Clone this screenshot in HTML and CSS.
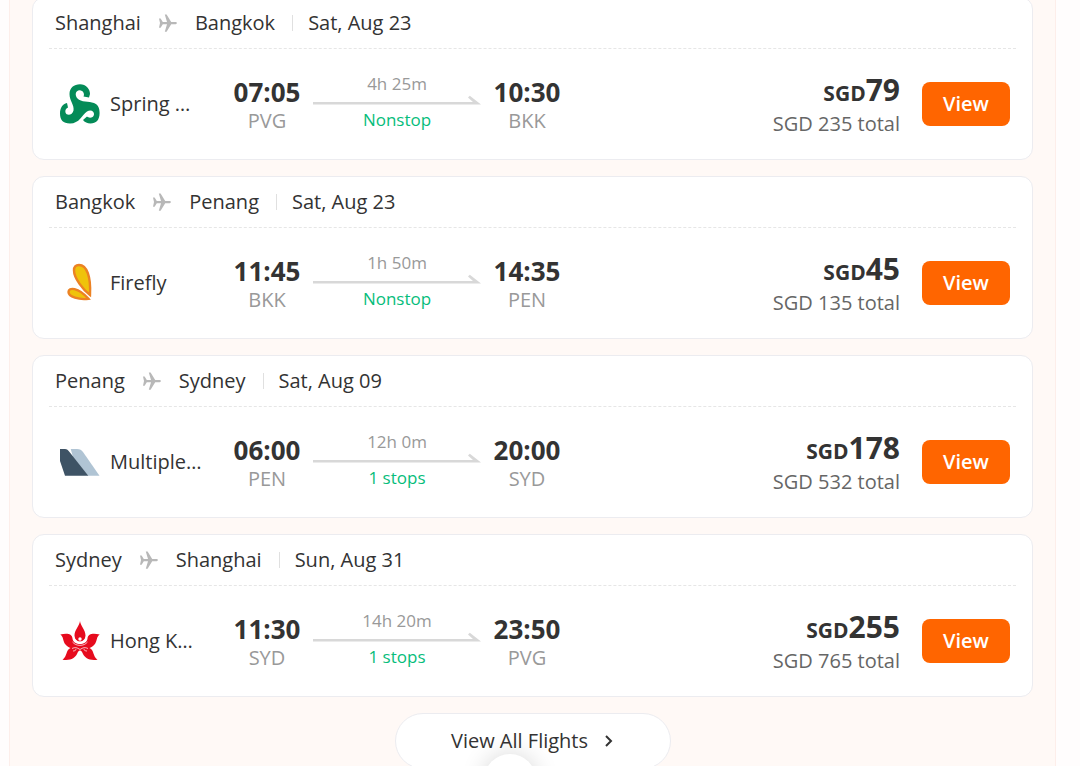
FILE: index.html
```html
<!DOCTYPE html>
<html lang="en">
<head>
<meta charset="utf-8">
<meta name="viewport" content="width=device-width, initial-scale=1">
<title>Flights</title>
<link rel="stylesheet" href="styles.css">
</head>
<body>
<svg class="defs" aria-hidden="true">
  <symbol id="plane" viewBox="0 0 20 20">
    <path d="M1 5.500h1.600l2.200 3.500H9L6.800 1.500h1.800l4.600 7.500h4.500c1.600 0 1.600 2.200 0 2.200h-4.500L8.600 18.700H6.800L9 11.200H4.800L2.600 14.700H1l1-4.600z" fill="#b8b8b8"/>
  </symbol>
  <symbol id="arrow" viewBox="0 0 168 10">
    <path d="M0 7H160L155 2.500 156.800 .8 168 9.500H0z" fill="#d8d8d8"/>
  </symbol>
</svg>
<main class="panel">
  <article class="card">
    <header class="route"><span>Shanghai</span><svg class="plane"><use href="#plane"/></svg><span>Bangkok</span><time class="date">Sat, Aug 23</time></header>
    <div class="flight">
      <svg class="logo" viewBox="0 0 40 40"><path fill="#048b58" d="M9.500 10C9.500 4 14 .3 20 .3S30 5 30 10L29 13.500 23.500 12.500C25 10 23 6 19.500 6.200 15.500 6.500 14.500 11 17.500 14.500 21 18.500 29 17 34 19 38 20.500 39.600 24 39.600 29 39.600 36 36 39.500 30.500 39.500 27.500 39.500 24.500 38 23 36L27 32.500C29 34.500 33.500 34 34 30.500 34.500 27 30.500 25 27 27.500 22 31 19.500 39.500 10 39.500 3 39.500 0 36 0 29.500 0 24 2.500 20 7 19L8 23.500C5.500 24.500 5 26.500 5.500 28.500 6.500 32 12.500 31.500 13.500 26.500 14.500 21 9.500 17 9.500 10z"/></svg>
      <span class="airline">Spring Airlines</span>
      <div class="stop"><time>07:05</time><span>PVG</span></div>
      <div class="leg"><span class="duration">4h 25m</span><svg class="arrow"><use href="#arrow"/></svg><span class="stops">Nonstop</span></div>
      <div class="stop"><time>10:30</time><span>BKK</span></div>
      <div class="price"><strong><small>SGD</small>79</strong><span>SGD 235 total</span></div>
      <button class="view" type="button">View</button>
    </div>
  </article>
  <article class="card">
    <header class="route"><span>Bangkok</span><svg class="plane"><use href="#plane"/></svg><span>Penang</span><time class="date">Sat, Aug 23</time></header>
    <div class="flight">
      <svg class="logo" viewBox="0 0 40 40"><g fill="#efc30b" stroke="#ec8224" stroke-width="2.400"><path d="M30 32C23 27 14 15 14 7.500 14 3.500 16 2 19 2 27 2 31 14 30 32z"/><path d="M28.500 35.800C19 37 8.500 34 8.500 29 8.500 24 18 24 28.500 35.800z"/></g></svg>
      <span class="airline">Firefly</span>
      <div class="stop"><time>11:45</time><span>BKK</span></div>
      <div class="leg"><span class="duration">1h 50m</span><svg class="arrow"><use href="#arrow"/></svg><span class="stops">Nonstop</span></div>
      <div class="stop"><time>14:35</time><span>PEN</span></div>
      <div class="price"><strong><small>SGD</small>45</strong><span>SGD 135 total</span></div>
      <button class="view" type="button">View</button>
    </div>
  </article>
  <article class="card">
    <header class="route"><span>Penang</span><svg class="plane"><use href="#plane"/></svg><span>Sydney</span><time class="date">Sat, Aug 09</time></header>
    <div class="flight">
      <svg class="logo" viewBox="0 0 40 40"><path fill="#b0c4d4" d="M10.700 7H17C20 7 21.500 8 23 10L39.500 33.700H28L13 15z"/><path fill="#3e5365" d="M0 7H5C7 7 8 8 9.500 10L28.300 33.700H5L0 19z"/></svg>
      <span class="airline">Multiple airlines</span>
      <div class="stop"><time>06:00</time><span>PEN</span></div>
      <div class="leg"><span class="duration">12h 0m</span><svg class="arrow"><use href="#arrow"/></svg><span class="stops">1 stops</span></div>
      <div class="stop"><time>20:00</time><span>SYD</span></div>
      <div class="price"><strong><small>SGD</small>178</strong><span>SGD 532 total</span></div>
      <button class="view" type="button">View</button>
    </div>
  </article>
  <article class="card">
    <header class="route"><span>Sydney</span><svg class="plane"><use href="#plane"/></svg><span>Shanghai</span><time class="date">Sun, Aug 31</time></header>
    <div class="flight">
      <svg class="logo" viewBox="0 0 40 40"><g fill="#e60b1e"><path d="M20 0C20.500 5 25.500 9 25.500 14.500 25.500 18 23 20.500 20 20.500S14.500 18 14.500 14.500C14.500 9 19.500 5 20 0z"/><path d="M.3 13.500C6 12 12 12 12.500 17.500 13 21.500 16.500 23 20 23S27 21.500 27.500 17.500C28 12 34 12 39.700 13.500 36 16 37.500 20 34.500 23.500 33 25.500 31 26.500 29.500 27 34.500 29.500 32.500 35 37.500 38.700 29 39.800 25 37 23 33 22 31 21.500 29.500 20 29.500S18 31 17 33C15 37 11 39.800 2.500 38.700 7.500 35 5.500 29.500 10.500 27 9 26.500 7 25.500 5.500 23.500 2.500 20 4 16 .3 13.500z"/></g><circle cx="20" cy="18" r="1.700" fill="#fff"/><g fill="none" stroke="#fff" stroke-width=".7"><path d="M14 15.500C14.500 23 25.500 23 26 15.500"/><path d="M12.500 21C16 25.500 24 25.500 27.500 21"/><path d="M12 27.500C15 26 17 26.500 20 28.500 23 26.500 25 26 28 27.500M13 30C15 30 16.500 29 15.500 28M27 30C25 30 23.500 29 24.500 28"/></g></svg>
      <span class="airline">Hong Kong Airlines</span>
      <div class="stop"><time>11:30</time><span>SYD</span></div>
      <div class="leg"><span class="duration">14h 20m</span><svg class="arrow"><use href="#arrow"/></svg><span class="stops">1 stops</span></div>
      <div class="stop"><time>23:50</time><span>PVG</span></div>
      <div class="price"><strong><small>SGD</small>255</strong><span>SGD 765 total</span></div>
      <button class="view" type="button">View</button>
    </div>
  </article>
  <button class="all" type="button">View All Flights
    <svg class="chevron" viewBox="0 0 10 14"><path d="M2 2l5 5-5 5" fill="none" stroke="#333" stroke-width="2"/></svg>
  </button>
</main>
<div class="floating"></div>
</body>
</html>
```
FILE: styles.css
```css
* {
  box-sizing: border-box;
}

body {
  margin: 0;
  height: 100vh;
  overflow: hidden;
  background: #fffdfd;
  color: #333;
  font: 20px/24px "Open Sans", "Noto Sans", sans-serif;
}

button {
  border: 0;
  padding: 0;
  font: inherit;
  cursor: pointer;
}

.defs {
  position: absolute;
  width: 0;
  height: 0;
}

.panel {
  display: flex;
  flex-direction: column;
  gap: 16px;
  min-height: 100vh;
  margin: -24px 24px 0 9px;
  padding: 20px 22px 24px;
  background: #fff9f6;
  border: 1px solid #fdeeea;
}

.card {
  flex: none;
  background: #fff;
  border: 1px solid #ececf0;
  border-radius: 12px;
}

.route {
  display: flex;
  align-items: center;
  gap: 17px;
  height: 51px;
  margin: 0 16px;
  padding: 0 6px;
  border-bottom: 1px dashed #e6e6e6;
}

.plane {
  width: 20px;
  height: 20px;
}

.date {
  position: relative;
  padding-left: 16px;
}

.date::before {
  content: "";
  position: absolute;
  left: 0;
  top: 4px;
  height: 16px;
  border-left: 1px solid #e0e0e0;
}

.flight {
  display: grid;
  grid-template-columns: 40px 112px 70px 170px 70px 1fr 88px;
  align-items: center;
  column-gap: 10px;
  height: 110px;
  padding: 0 22px 0 27px;
}

.logo {
  width: 40px;
  height: 40px;
}

.airline {
  margin-right: 20px;
  overflow: hidden;
  text-overflow: ellipsis;
  white-space: nowrap;
}

.stop,
.leg {
  display: flex;
  flex-direction: column;
  align-items: center;
}

.stop {
  color: #999;
}

.stop time {
  color: #333;
  font-size: 26px;
  font-weight: 700;
  line-height: 34px;
}

.leg {
  font-size: 17px;
}

.duration {
  color: #999;
  line-height: 22px;
}

.arrow {
  width: 168px;
  height: 10px;
}

.stops {
  color: #06bd7b;
  font-weight: 500;
  line-height: 30px;
}

.price {
  display: flex;
  flex-direction: column;
  align-items: flex-end;
  padding-right: 12px;
  color: #666;
}

.price strong {
  color: #333;
  font-size: 30px;
  line-height: 36px;
}

.price small {
  font-size: 21px;
}

.price span {
  line-height: 26px;
}

.view {
  height: 44px;
  border-radius: 8px;
  background: #ff6500;
  color: #fff;
  font-weight: 600;
}

.all {
  display: flex;
  align-items: center;
  justify-content: center;
  gap: 16px;
  flex: none;
  align-self: center;
  min-width: 276px;
  height: 56px;
  border: 1px solid #ececf0;
  border-radius: 28px;
  background: #fff;
  color: #333;
}

.chevron {
  width: 10px;
  height: 14px;
}

.floating {
  position: fixed;
  bottom: -40px;
  left: 510px;
  width: 52px;
  height: 52px;
  margin-left: -26px;
  border-radius: 50%;
  background: #fff;
  box-shadow: 0 0 24px rgba(0, 0, 0, 0.16);
}
```
